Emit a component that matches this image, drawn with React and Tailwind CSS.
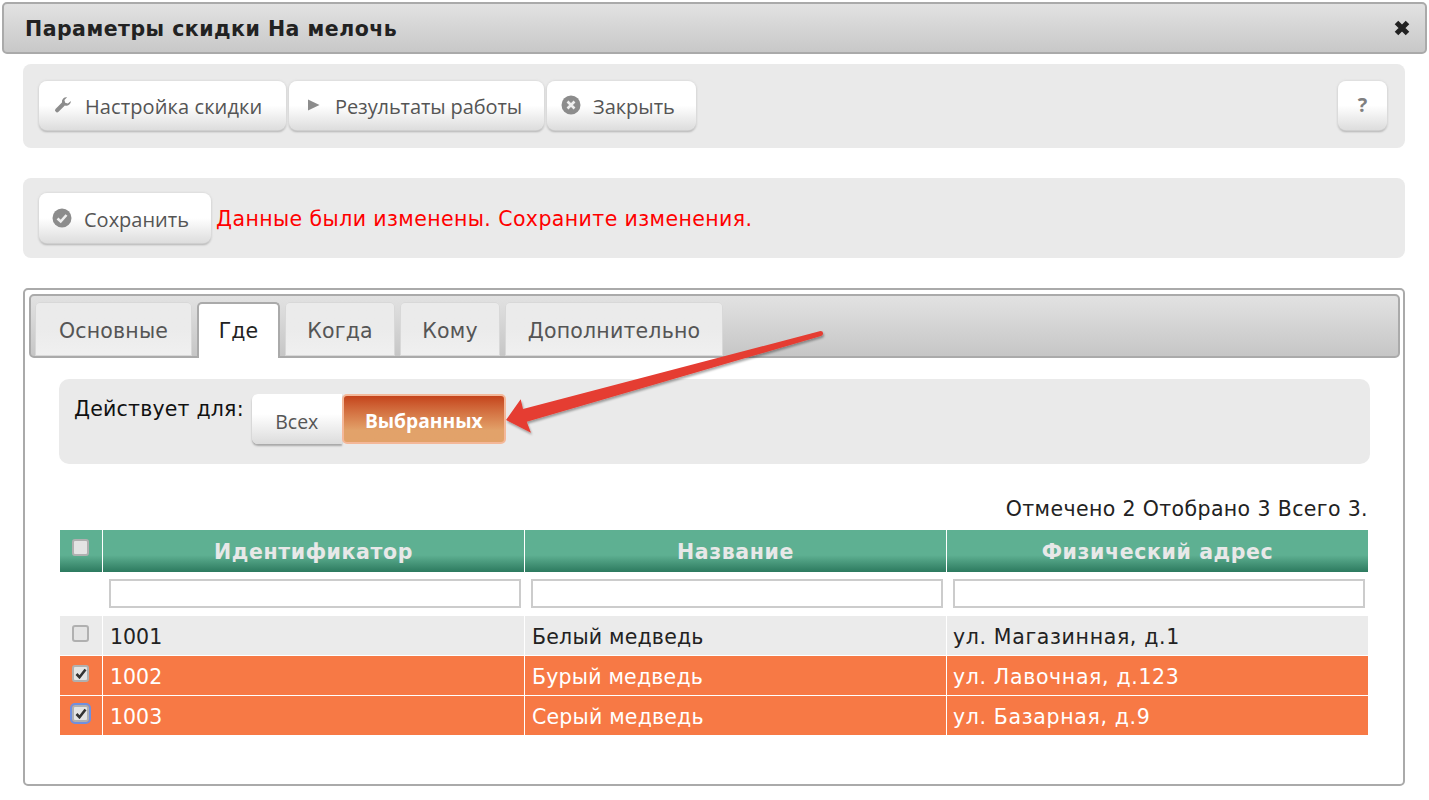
import React from "react";

const FONT = "font-['DejaVu_Sans','Liberation_Sans',sans-serif]";
const btn =
  "flex items-center rounded-[8px] bg-gradient-to-b from-white from-50% to-[#dddddd] shadow-[0_0_2px_1px_#dcdcdc,0_2px_2px_#a8a8a8] font-['Open_Sans',sans-serif] text-[20px] text-[#555555]";

const Wrench = () => (
  <svg width="18" height="18" viewBox="0 0 24 24" className="shrink-0">
    <path
      fill="#8c8c8c"
      d="M22.5 6.5a6 6 0 0 1-8 6L6 21a2.6 2.6 0 0 1-3.8-.2A2.6 2.6 0 0 1 2 17.2l8.6-8.6a6 6 0 0 1 6.9-6.9l-3.6 3.6 1 3.6 3.6 1z"
    />
  </svg>
);
const Play = () => (
  <svg width="13" height="12" viewBox="0 0 13 12" className="shrink-0">
    <path fill="#8c8c8c" d="M1 0.5 12.5 6 1 11.5z" />
  </svg>
);
const CircleX = () => (
  <svg width="20" height="20" viewBox="0 0 20 20" className="shrink-0">
    <circle cx="10" cy="10" r="9.5" fill="#8c8c8c" />
    <path d="M6.5 6.5l7 7M13.5 6.5l-7 7" stroke="#eeeeee" strokeWidth="2.6" />
  </svg>
);
const CircleCheck = () => (
  <svg width="20" height="20" viewBox="0 0 20 20" className="shrink-0">
    <circle cx="10" cy="10" r="9.5" fill="#8c8c8c" />
    <path d="M5.5 10.5l3.2 3 5.8-6.5" stroke="#eeeeee" strokeWidth="2.6" fill="none" />
  </svg>
);

const Check = ({ checked, focus }) => (
  <span
    className={`flex h-[17px] w-[17px] items-center justify-center rounded-[3px] border-2 border-[#b0b0b0] bg-[#e4e4e4] ${
      focus ? "outline-2 outline-[#6f8fe0]" : ""
    }`}
  >
    {checked && (
      <svg width="12" height="11" viewBox="0 0 12 11">
        <path d="M1.5 6l3 3.2L10.5 1.5" stroke="#333333" strokeWidth="2.6" fill="none" />
      </svg>
    )}
  </span>
);

const Tab = ({ label, width, active }) =>
  active ? (
    <div
      className={`-mb-[2px] flex h-[56px] ${width} items-center justify-center rounded-t-[5px] border-x-2 border-t-2 border-[#aaaaaa] border-b-0 bg-white pt-[1px] text-[20.5px] text-[#222222]`}
    >
      {label}
    </div>
  ) : (
    <div
      className={`flex h-[54px] ${width} items-center justify-center rounded-t-[5px] bg-gradient-to-b from-[#ebebeb] from-50% to-[#f0f0f0] pt-[4px] shadow-[inset_0_0_0_1px_#d8d8d8] text-[20.5px] tracking-[0.2px] text-[#555555]`}
    >
      {label}
    </div>
  );

const cols = "grid grid-cols-[42px_421px_421px_421px] gap-x-px";
const head = "flex items-center justify-center bg-gradient-to-b from-[#5eb092] from-60% to-[#2c7a5f] pt-[2px]";

const rows = [
  { cb: false, id: "1001", name: "Белый медведь", addr: "ул. Магазинная, д.1" },
  { cb: true, id: "1002", name: "Бурый медведь", addr: "ул. Лавочная, д.123" },
  { cb: true, focus: true, id: "1003", name: "Серый медведь", addr: "ул. Базарная, д.9" },
];

export default function App() {
  return (
    <div className={`relative h-[800px] w-[1429px] overflow-hidden bg-white ${FONT}`}>
      <div className="px-[2px] pt-[2px]">
        <div className="flex h-[52px] items-center justify-between rounded-[5px] border-2 border-[#aaaaaa] bg-gradient-to-b from-[#e2e2e2] to-[#c8c8c8] pl-[21px] pr-[14px]">
          <span className="pt-[3px] text-[20.5px] font-bold tracking-[0.48px] text-[#222222]">Параметры скидки На мелочь</span>
          <svg width="18" height="18" viewBox="0 0 18 18">
            <path d="M3.5 3.5l11 11M14.5 3.5l-11 11" stroke="#222222" strokeWidth="5" />
          </svg>
        </div>
      </div>

      <div className="mx-[23px] mt-[10px] w-[1382px]">
        <div className="flex h-[84px] items-center justify-between rounded-[8px] bg-[#eaeaea] pb-[2px] pl-[16px] pr-[18px]">
          <div className="flex items-center gap-[3px]">
            <div className={`${btn} h-[49px] w-[247px] gap-[13px] pl-[15px]`}>
              <Wrench />
              <span className="pt-[3px] tracking-[0.1px]">Настройка скидки</span>
            </div>
            <div className={`${btn} h-[49px] w-[255px] gap-[15px] pl-[18px]`}>
              <Play />
              <span className="pt-[3px] tracking-[-0.1px]">Результаты работы</span>
            </div>
            <div className={`${btn} h-[49px] w-[149px] gap-[12px] pl-[14px]`}>
              <CircleX />
              <span className="pt-[3px]">Закрыть</span>
            </div>
          </div>
          <div className={`${btn} h-[49px] w-[49px] justify-center font-['DejaVu_Sans',sans-serif] text-[15px] font-bold text-[#808080]`}>?</div>
        </div>

        <div className="mt-[30px] flex h-[80px] items-center rounded-[8px] bg-[#eaeaea] pl-[16px]">
          <div className={`${btn} h-[50px] w-[172px] gap-[12px] pl-[13px]`}>
            <CircleCheck />
            <span className="pt-[4px]">Сохранить</span>
          </div>
          <span className="ml-[5px] pt-[2px] text-[20.5px] tracking-[0.4px] text-[#ff0000]">
            Данные были изменены. Сохраните изменения.
          </span>
        </div>

        <div className="mt-[30px] h-[498px] rounded-[5px] border-2 border-[#aaaaaa] py-[4px] pl-[4px] pr-[3px]">
          <div className="flex h-[64px] items-end gap-[5px] rounded-[5px] border-2 border-[#aaaaaa] bg-gradient-to-b from-[#e2e2e2] to-[#c6c6c6] pl-[4px]">
            <Tab label="Основные" width="w-[157px]" />
            <Tab label="Где" width="w-[83px]" active />
            <Tab label="Когда" width="w-[110px]" />
            <Tab label="Кому" width="w-[100px]" />
            <Tab label="Дополнительно" width="w-[218px]" />
          </div>

          <div className="ml-[30px] mt-[21px] flex h-[85px] w-[1311px] items-start rounded-[10px] bg-[#eaeaea] pl-[15px] pt-[15px]">
            <span className="text-[20.5px] tracking-[0.2px] text-[#111111]">Действует для:</span>
            <div className="ml-[8px] flex">
              <div className="flex h-[50px] w-[90px] items-center justify-center rounded-l-[6px] bg-gradient-to-b from-white from-40% to-[#dcdcdc] pt-[5px] font-['Open_Sans',sans-serif] text-[19.5px] text-[#555555] shadow-[0_2px_2px_#a8a8a8]">
                Всех
              </div>
              <div className="flex h-[50px] w-[164px] items-center justify-center rounded-[5px] border-2 border-[#f4b899] bg-gradient-to-b from-[#c4431a] to-[#e2a26a] to-75% pt-[4px] font-['Open_Sans',sans-serif] text-[19.2px] font-bold text-white">
                Выбранных
              </div>
            </div>
          </div>

          <div className="ml-[31px] mt-[31px] w-[1308px]">
            <div className="text-right text-[20.5px] leading-[28px] tracking-[0.37px] text-[#222222]">
              Отмечено 2 Отобрано 3 Всего 3.
            </div>
            <div className={`${cols} mt-[7px] h-[42px] text-[20.5px] font-bold tracking-[0.6px] text-[#e8e8e8]`}>
              <div className={head}>
                <span className="-mt-[10px] mr-[1px] flex">
                  <Check />
                </span>
              </div>
              <div className={head}>Идентификатор</div>
              <div className={head}>Название</div>
              <div className={head}>Физический адрес</div>
            </div>
            <div className={`${cols} h-[44px] items-start pt-[7px]`}>
              <div />
              {[0, 1, 2].map((i) => (
                <div key={i} className="pl-[6px] pr-[3px]">
                  <div className="h-[29px] w-[412px] border-2 border-[#cccccc] bg-white" />
                </div>
              ))}
            </div>
            <div className="flex flex-col gap-px">
              {rows.map((r) => {
                const bg = r.cb ? "bg-[#f77945] text-white" : "bg-[#ebebeb] text-[#222222]";
                return (
                  <div key={r.id} className={`${cols} h-[39px] text-[20.5px]`}>
                    <div className={`flex items-start justify-center pr-[1px] pt-[9px] ${bg}`}>
                      <Check checked={r.cb} focus={r.focus} />
                    </div>
                    <div className={`flex items-center pl-[7px] pt-[4px] ${bg}`}>{r.id}</div>
                    <div className={`flex items-center pl-[7px] pt-[4px] tracking-[0.2px] ${bg}`}>{r.name}</div>
                    <div className={`flex items-center pl-[6px] pt-[4px] tracking-[0.65px] ${bg}`}>{r.addr}</div>
                  </div>
                );
              })}
            </div>
          </div>
        </div>
      </div>

      <svg className="pointer-events-none absolute left-0 top-0" width="1429" height="800" viewBox="0 0 1429 800">
        <defs>
          <filter id="arrowShadow" x="-5%" y="-20%" width="110%" height="140%">
            <feDropShadow dx="1" dy="2" stdDeviation="1" floodColor="#000000" floodOpacity="0.35" />
          </filter>
        </defs>
        <path
          filter="url(#arrowShadow)"
          fill="#e53c32"
          d="M506 420 L520.7 399.3 L523 409 L820.5 331 Q823.5 331 823 334 Q822.5 335.5 821 336 L526.7 421.7 L531 432.7 Z"
        />
      </svg>
    </div>
  );
}
